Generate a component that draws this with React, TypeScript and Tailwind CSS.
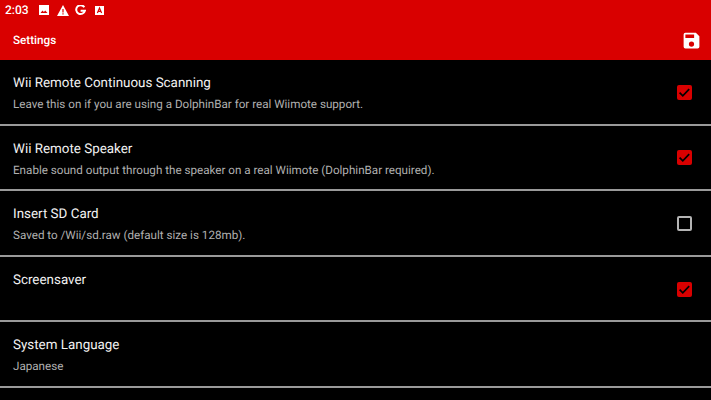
import React from 'react';

const settings = [
  { title: 'Wii Remote Continuous Scanning', summary: 'Leave this on if you are using a DolphinBar for real Wiimote support.', checked: true },
  { title: 'Wii Remote Speaker', summary: 'Enable sound output through the speaker on a real Wiimote (DolphinBar required).', checked: true },
  { title: 'Insert SD Card', summary: 'Saved to /Wii/sd.raw (default size is 128mb).', checked: false },
  { title: 'Screensaver', summary: '', checked: true },
  { title: 'System Language', summary: 'Japanese' },
];

function CheckBox({ checked }: { checked: boolean }) {
  if (!checked) {
    return <div className="mt-[1px] w-[15px] h-[15px] rounded-[2px] border-2 border-[#b4b4b4]" />;
  }
  return (
    <div className="mt-[1px] w-[15px] h-[15px] rounded-[2px] bg-[#d90000] flex items-center justify-center">
      <svg width="15" height="15" viewBox="0 0 15 15" fill="none">
        <path d="M2.6 7.6l3.2 3.2 6.4-6.6" stroke="#000" strokeWidth="1.7" />
      </svg>
    </div>
  );
}

function StatusIcons() {
  return (
    <div className="flex items-center ml-[10px]">
      <svg width="10" height="10" viewBox="0 0 10 10">
        <path d="M0 0h10v10H0z" fill="#fff" />
        <path d="M1.5 8l2-2.6 1.4 1.6 1.3-1.4L8.5 8z" fill="#d90000" />
      </svg>
      <svg className="ml-[8px]" width="12" height="11" viewBox="0 0 12 11">
        <path d="M6 0l6 11H0z" fill="#fff" />
        <path d="M5.4 4h1.2v3.5H5.4zM5.4 8.2h1.2v1.2H5.4z" fill="#d90000" />
      </svg>
      <svg className="ml-[6px]" width="11" height="11" viewBox="0 0 11 11" fill="none">
        <path d="M9.3 2.2A4.4 4.4 0 1 0 9.9 5.7H5.6" stroke="#fff" strokeWidth="2" />
      </svg>
      <div className="relative ml-[9px] w-[9px] h-[9px] bg-white">
        <svg className="absolute inset-0" width="9" height="9" viewBox="0 0 9 9" fill="none">
          <path d="M2.4 7L4.5 2l2.1 5M3.2 5.4h2.6" stroke="#d90000" strokeWidth="1.2" />
        </svg>
      </div>
    </div>
  );
}

export default function App() {
  return (
    <div
      className="w-[711px] h-[400px] overflow-hidden bg-black flex flex-col [text-rendering:geometricPrecision]"
      style={{ fontFamily: 'Roboto, sans-serif' }}
    >
      {/* status + toolbar */}
      <div className="h-[60px] shrink-0 bg-[#d90000] text-white">
        <div className="h-[20px] flex items-center pl-[5px]">
          <span className="text-[12px] leading-none font-medium">2:03</span>
          <StatusIcons />
        </div>
        <div className="h-[40px] flex items-center justify-between pl-[13px] pr-[9px]">
          <span className="text-[11.7px] font-medium pt-[1px]">Settings</span>
          <svg width="21" height="21" viewBox="0 0 24 24" fill="#fff">
            <path d="M17 3H5a2 2 0 0 0-2 2v14a2 2 0 0 0 2 2h14a2 2 0 0 0 2-2V7l-4-4zm-5 16a3 3 0 1 1 0-6 3 3 0 0 1 0 6zm3-10H5V5h10v4z" />
          </svg>
        </div>
      </div>

      {settings.map((s) => (
        <div
          key={s.title}
          className="h-[65.6px] shrink-0 flex items-center justify-between border-b-2 border-[#9a9a9a] pl-[13px] pr-[19px]"
        >
          <div className="self-start pt-[15px]">
            <div className="text-[13.4px] leading-[18px] text-[#f2f2f2]">{s.title}</div>
            <div className="text-[11.65px] leading-[16px] mt-[3px] text-[#b0b0b0]">{s.summary}</div>
          </div>
          {s.checked !== undefined && <CheckBox checked={s.checked} />}
        </div>
      ))}
    </div>
  );
}
